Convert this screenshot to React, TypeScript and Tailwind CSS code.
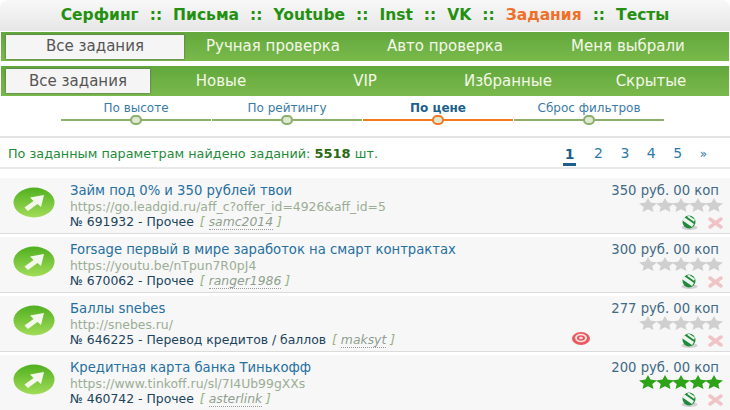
import React from 'react';

const font = { fontFamily: '"DejaVu Sans", Verdana, sans-serif' };

const navLinks = ['Серфинг', 'Письма', 'Youtube', 'Inst', 'VK', 'Задания', 'Тесты'];
const filters = [
  { label: 'По высоте' },
  { label: 'По рейтингу' },
  { label: 'По цене', active: true },
  { label: 'Сброс фильтров' },
];

const tasks = [
  { title: 'Займ под 0% и 350 рублей твои', url: 'https://go.leadgid.ru/aff_c?offer_id=4926&aff_id=5', num: '№ 691932', cat: 'Прочее', user: 'samc2014', price: '350' },
  { title: 'Forsage первый в мире заработок на смарт контрактах', url: 'https://youtu.be/nTpun7R0pJ4', num: '№ 670062', cat: 'Прочее', user: 'ranger1986', price: '300' },
  { title: 'Баллы snebes', url: 'http://snebes.ru/', num: '№ 646225', cat: 'Перевод кредитов / баллов', user: 'maksyt', price: '277', target: true },
  { title: 'Кредитная карта банка Тинькофф', url: 'https://www.tinkoff.ru/sl/7I4Ub99gXXs', num: '№ 460742', cat: 'Прочее', user: 'asterlink', price: '200', green: true },
];

const GoIcon = ({ id }: { id: string }) => (
  <svg width="42" height="31" viewBox="0 0 42 31" className="shrink-0">
    <defs>
      <linearGradient id={id} x1="0" y1="0" x2="0" y2="1">
        <stop offset="0" stopColor="#4fb01f" />
        <stop offset="1" stopColor="#a2dc58" />
      </linearGradient>
    </defs>
    <ellipse cx="21" cy="15.5" rx="20.500" ry="15" fill={`url(#${id})`} />
    <path d="M15 24l-3.500-3.500 9-6.500-3.500-3.500 14-2.500-3 12-3.500-3z" fill="#f4f8ec" />
  </svg>
);

const Star = ({ green }: { green?: boolean }) => (
  <svg width="18" height="14" viewBox="0 0 18 14" className="-ml-[1.500px] first:ml-0">
    <path d="M9 0l2.500 4.600 6.500.8-4.700 3.500L14.500 14 9 11.300 3.500 14l1.200-5.100L0 5.400l6.500-.8z" fill={green ? '#2ea31a' : '#cfcfcf'} />
  </svg>
);

const Ball = () => (
  <svg width="17" height="15" viewBox="0 0 17 15">
    <ellipse cx="8.500" cy="12.500" rx="8" ry="2.500" fill="#d0d0d0" />
    <circle cx="8" cy="7" r="6.500" fill="#1f8a3a" />
    <path d="M3 2l10 7-2 3-9.500-6.500zM8 .8l6 4-1 2-7-5z" fill="#eef5ee" />
  </svg>
);

const Cross = () => (
  <svg width="15" height="12" viewBox="0 0 15 12">
    <path d="M2 2l11 8M13 2L2 10" stroke="#eec4c6" strokeWidth="3.500" strokeLinecap="round" />
  </svg>
);

const Target = () => (
  <svg width="18" height="13" viewBox="0 0 18 13">
    <ellipse cx="9" cy="6.500" rx="9" ry="6.500" fill="#e85a5f" />
    <ellipse cx="9" cy="6" rx="6" ry="4.200" fill="#fbe4e2" />
    <ellipse cx="9" cy="6" rx="4" ry="2.800" fill="#e85a5f" />
    <ellipse cx="9" cy="6" rx="1.800" ry="1.300" fill="#fbe4e2" />
  </svg>
);

const TaskRow = ({ task }: { task: (typeof tasks)[number] }) => (
  <div className="mb-[3px] flex h-[56px] items-start border-b border-b-[#dcdcdc] bg-[#f7f7f7] pl-[13px] pr-[7px] pt-[5px]">
    <div className="pt-[4px]"><GoIcon id={`go-${task.price}`} /></div>
    <div className="ml-[15px] flex min-w-0 flex-1 flex-col text-[12.4px] leading-[15px]">
      <span className="text-[13.2px] leading-[16px] text-[#25709f]">{task.title}</span>
      <span className="text-[#9bad95]">{task.url}</span>
      <span className="text-[#20445c]">
        {task.num} - {task.cat}
        <span className="ml-[6px] italic text-[#93b27a]">[ <span className="border-b border-dotted border-[#9a9a9a] text-[#8f9f8f]">{task.user}</span> ]</span>
      </span>
    </div>
    {task.target && <div className="mr-[8px] mt-[31px]"><Target /></div>}
    <div className="flex w-[125px] shrink-0 flex-col items-end">
      <span className="whitespace-nowrap pr-[4px] text-[13.2px] leading-[16px] text-[#3f6a85]">{task.price} руб. 00 коп</span>
      <div className="-mt-[1px] flex h-[14px]">
        {[0, 1, 2, 3, 4].map((i) => <Star key={i} green={task.green} />)}
      </div>
      <div className="mt-[3px] flex items-center gap-[10px]"><Ball /><Cross /></div>
    </div>
  </div>
);

export default function App() {
  return (
    <div style={font} className="h-[410px] w-[730px] overflow-hidden bg-white">
      <div className="flex h-[31px] items-center justify-center gap-[11px] rounded-t-[8px] bg-gradient-to-b from-[#f8f8f8] to-[#e6e6e6] text-[15.500px] font-bold text-[#23900f]">
        {navLinks.map((n, i) => (
          <React.Fragment key={n}>
            {i > 0 && <span>::</span>}
            <span className={n === 'Задания' ? 'text-[#f0702a]' : ''}>{n}</span>
          </React.Fragment>
        ))}
      </div>
      <div className="mx-px mt-px flex h-[29px] items-center bg-gradient-to-b from-[#62a83c] to-[#7ab94c] pl-[5px] text-[15px] text-[#f4f8e8]">
        <div className="flex h-[24px] w-[178px] items-center justify-center bg-[#f5f5f5] text-[#555] shadow-[0_0_2px_#555]">Все задания</div>
        <span className="w-[178px] text-center">Ручная проверка</span>
        <span className="w-[166px] text-center">Авто проверка</span>
        <span className="w-[200px] text-center">Меня выбрали</span>
      </div>
      <div className="mx-px mt-[5px] flex h-[30px] items-center bg-gradient-to-b from-[#62a83c] to-[#7ab94c] pl-[5px] text-[15px] text-[#f4f8e8]">
        <div className="flex h-[24px] w-[144px] items-center justify-center bg-[#f5f5f5] text-[#555] shadow-[0_0_2px_#555]">Все задания</div>
        <span className="w-[142px] text-center">Новые</span>
        <span className="w-[146px] text-center">VIP</span>
        <span className="w-[140px] text-center">Избранные</span>
        <span className="w-[146px] text-center">Скрытые</span>
      </div>
      <div className="flex h-[42px] gap-[1px] border-b-2 border-b-[#e4e4e4] pl-[61px] pt-[5px]">
        {filters.map((f) => (
          <div key={f.label} className="flex w-[150px] flex-col items-center">
            <span className={`text-[12px] leading-[15px] ${f.active ? 'font-bold text-[#1d5f8c]' : 'text-[#3a7ba6]'}`}>{f.label}</span>
            <div className={`relative mt-[3px] h-[2px] w-full ${f.active ? 'bg-[#f47a20]' : 'bg-[#8cb06a]'}`}>
              <div className={`absolute left-1/2 top-[-4px] h-[10px] w-[12px] -translate-x-1/2 rounded-full border-2 bg-[#dfe8d0] ${f.active ? 'border-[#f47a20]' : 'border-[#8cb06a]'}`} />
            </div>
          </div>
        ))}
      </div>
      <div className="flex h-[31px] items-center justify-between border-b-2 border-b-[#e8e8e8] pl-[8px] pr-[23px] pt-[2px] text-[12.8px] text-[#1f8a3a]">
        <span>По заданным параметрам найдено заданий: <b className="text-[13px] text-[#2a6b12]">5518</b> шт.</span>
        <div className="flex items-center gap-[17.500px] text-[14px] text-[#2c7aa5]">
          <span className="-mb-[3px] border-b-[3px] border-[#1d5f8c] px-[2px] font-bold leading-[18px] text-[#1d5f8c]">1</span>
          <span>2</span><span>3</span><span>4</span><span>5</span><span className="text-[12px]">»</span>
        </div>
      </div>
      <div className="mt-[9px] flex flex-col">
        {tasks.map((t) => <TaskRow key={t.num} task={t} />)}
      </div>
    </div>
  );
}
